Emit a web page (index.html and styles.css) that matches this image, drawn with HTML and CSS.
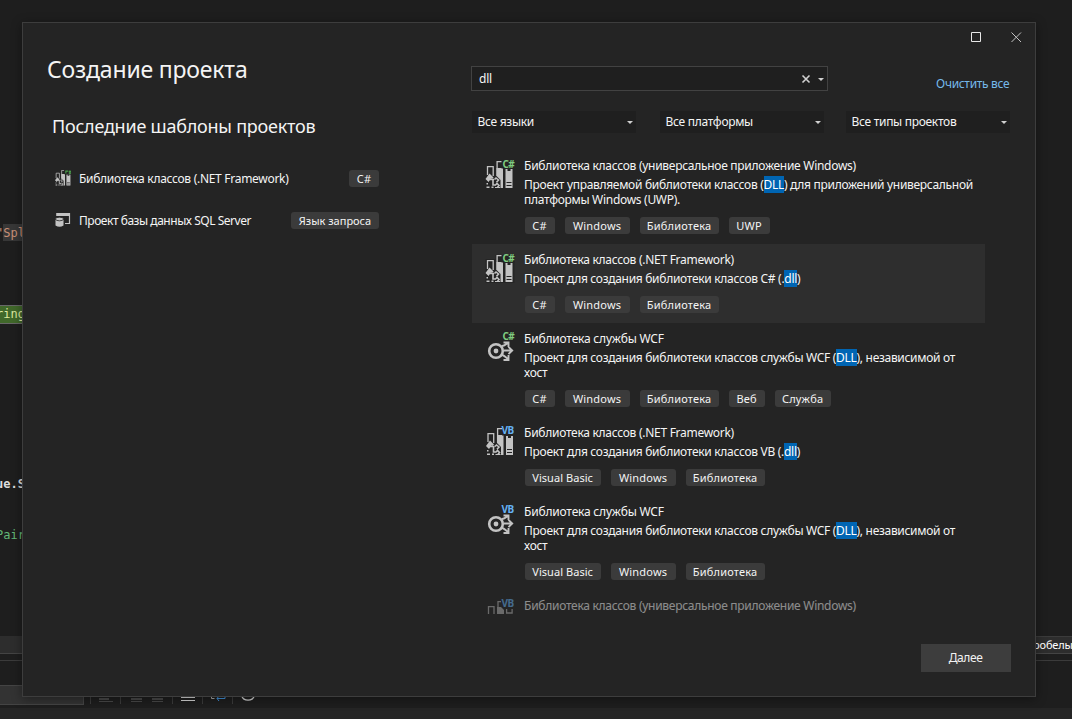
FILE: index.html
```html
<!DOCTYPE html>
<html lang="ru">
<head>
<meta charset="utf-8">
<title>Создание проекта</title>
<link rel="stylesheet" href="styles.css">
</head>
<body>
<svg width="0" height="0" class="defs">
  <defs>
    <g id="books">
      <path fill="#242424" d="M0 4h10V0h19v28H0z"/>
      <path fill="none" stroke="#c3c3c3" stroke-width="1.300" d="M2 14V5.600H7.700V15M11.600 15V.7H17"/>
      <path fill="#c3c3c3" d="M11 7h6.500v20H15v-8l-4-4zM20 8h7v19h-7z"/>
      <path fill="#242424" d="M16 0h13v7.500H16zM22 8h3v2h-3zM21 21h5v1h-5zM21 24h5v1h-5z"/>
      <path fill="#c3c3c3" d="M4 12.500l4 4-1.500 1.500-1-.5L3 21l-3-3z"/>
      <path fill="none" stroke="#c3c3c3" stroke-width="1.600" d="M4 18.500h4.500M7.500 19v5h3M9 18.500l1.500-1.500 2.500 2-2 2.200M10 24l1.500-1.500 2 2-1.500 1.700"/>
      <path fill="#c3c3c3" d="M1 22h1.500v1.500H1zM1 25.500h3V27H1zM6 25.500h2V27H6zM9.500 26h5v1h-5z"/>
    </g>
    <g id="service">
      <circle cx="10" cy="18" r="6.800" fill="none" stroke="#c3c3c3" stroke-width="2.600"/>
      <circle cx="10" cy="18" r="2.400" fill="#c3c3c3"/>
      <path fill="none" stroke="#c3c3c3" stroke-width="1.900" d="M18 17.500h8M22.500 13.800l3.700 3.700-3.700 3.700M16 13c2 0 3-1 6-3M17.500 9.500h5V14M16 22c2 0 3 2 6 4M17.500 27h5v-5"/>
    </g>
  </defs>
</svg>
<div class="editor">
  <span class="code string">"<i>Spl</i></span>
  <span class="code match">ring</span>
  <span class="code member">ue.S</span>
  <span class="code type">Pair</span>
  <div class="status left"></div>
  <div class="status right">робелы</div>
  <div class="rule"></div>
  <div class="combo"></div>
  <svg class="toolbar" width="280" height="12">
    <path stroke="#3b3b3b" d="M10.500 0v8M40.500 0v8M92.500 0v8M122.500 0v8M152.500 0v8"/>
    <path stroke="#484848" stroke-width="2" d="M19 3h10M51 3h11M72 3h11"/>
    <path stroke="#484848" d="M19 5.500h14M51 5.500h11M72 5.500h11"/>
    <path stroke="#d6d6d6" d="M101 1.500h14M101 4.500h14"/>
    <path stroke="#aaa" fill="none" d="M131.500 0v2.500h3"/>
    <path stroke="#4290d8" fill="none" d="M145 0v2.500h-8M139 0l-2 2.500 2 2.500"/>
    <path stroke="#d0d0d0" fill="none" d="M161.800 0a6.400 5.500 0 0 0 12.400 0" stroke-width="1.300"/>
  </svg>
  <div class="footer"></div>
</div>
<main class="dialog">
  <section class="recent">
    <h1>Создание проекта</h1>
    <h2>Последние шаблоны проектов</h2>
    <div class="recent-row">
      <svg width="16" height="16" viewBox="0 0 28 28"><use href="#books"/><path d="M19 6V2h4M24 2.500h4M24 5.500h4M26 1v6" stroke="#4b9b4b" stroke-width="2" fill="none"/></svg>
      <span class="name net">Библиотека классов (.NET Framework)</span><span class="tag t-cs">C#</span>
    </div>
    <div class="recent-row">
      <svg width="16" height="16"><path fill="none" stroke="#c3c3c3" stroke-width="1.200" d="M2 4V1.500h12.500v10H10M2 3.500h12"/><path fill="#c3c3c3" d="M1.500 1H15v3H1.500zM.5 8h8v5.500q-4 2.500-8 0z"/><ellipse cx="4.500" cy="7" rx="4" ry="1.800" fill="#c3c3c3" stroke="#242424" stroke-width=".8"/></svg>
      <span class="name sql">Проект базы данных SQL Server</span><span class="tag t-query">Язык запроса</span>
    </div>
  </section>
  <section class="search">
    <div class="caption">
      <svg width="60" height="14"><path d="M5.500 2.500h9v9h-9z" fill="none" stroke="#e8e8e8"/><path d="M45.500 2.500l9.500 9.500M55 2.500L45.500 12" stroke="#c4c4c4"/></svg>
    </div>
    <div class="top">
      <div class="field"><span>dll</span><svg width="30" height="12"><path d="M6.500 2.500l7 7M13.500 2.500l-7 7" stroke="#d0d0d0" stroke-width="1.600"/><path d="M22 5h6l-3 3z" fill="#d0d0d0"/></svg></div>
      <a class="clear">Очистить все</a>
    </div>
    <div class="filters">
      <div class="filter"><span>Все языки</span><b></b></div>
      <div class="filter platforms"><span>Все платформы</span><b></b></div>
      <div class="filter"><span>Все типы проектов</span><b></b></div>
    </div>
    <div class="list">
      <article class="item">
        <svg class="icon" width="32" height="32"><use href="#books" x="1.500" y="3"/><text class="cs" x="18.500" y="10">C#</text></svg>
        <div class="info"><h3>Библиотека классов (универсальное приложение Windows)</h3>
        <p>Проект управляемой библиотеки классов (<mark>DLL</mark>) для приложений универсальной<br>платформы Windows (UWP).</p>
        <div class="tags"><span class="tag t-cs">C#</span><span class="tag t-win">Windows</span><span class="tag t-lib">Библиотека</span><span class="tag t-uwp">UWP</span></div></div>
      </article>
      <article class="item selected">
        <svg class="icon" width="32" height="32"><use href="#books" x="1.500" y="3"/><text class="cs" x="18.500" y="10">C#</text></svg>
        <div class="info"><h3>Библиотека классов (.NET Framework)</h3>
        <p>Проект для создания библиотеки классов C# (.<mark>dll</mark>)</p>
        <div class="tags"><span class="tag t-cs">C#</span><span class="tag t-win">Windows</span><span class="tag t-lib">Библиотека</span></div></div>
      </article>
      <article class="item">
        <svg class="icon" width="32" height="32"><use href="#service" x="2" y="2"/><text class="cs" x="18.500" y="9">C#</text></svg>
        <div class="info"><h3 class="wcf">Библиотека службы WCF</h3>
        <p>Проект для создания библиотеки классов службы WCF (<mark>DLL</mark>), независимой от<br>хост</p>
        <div class="tags"><span class="tag t-cs">C#</span><span class="tag t-win">Windows</span><span class="tag t-lib">Библиотека</span><span class="tag t-web">Веб</span><span class="tag t-service">Служба</span></div></div>
      </article>
      <article class="item">
        <svg class="icon" width="32" height="32"><use href="#books" x="2" y="3"/><text class="vb" x="17.500" y="9">VB</text></svg>
        <div class="info"><h3>Библиотека классов (.NET Framework)</h3>
        <p>Проект для создания библиотеки классов VB (.<mark>dll</mark>)</p>
        <div class="tags"><span class="tag t-vb">Visual Basic</span><span class="tag t-win">Windows</span><span class="tag t-lib">Библиотека</span></div></div>
      </article>
      <article class="item">
        <svg class="icon" width="32" height="32"><use href="#service" x="2" y="2"/><text class="vb" x="17.500" y="9">VB</text></svg>
        <div class="info"><h3 class="wcf">Библиотека службы WCF</h3>
        <p>Проект для создания библиотеки классов службы WCF (<mark>DLL</mark>), независимой от<br>хост</p>
        <div class="tags"><span class="tag t-vb">Visual Basic</span><span class="tag t-win">Windows</span><span class="tag t-lib">Библиотека</span></div></div>
      </article>
      <article class="item faded">
        <svg class="icon" width="32" height="32"><path fill="none" stroke="#b0b0b0" stroke-width="1.300" d="M4.500 16V8.600h5.500V16M17 3.600h-3V16M22.600 11v4h5.500v-4"/><path fill="#b0b0b0" d="M13 9h4l3 3v4h-7z"/><text class="vb" x="17.500" y="9">VB</text></svg>
        <div class="info"><h3>Библиотека классов (универсальное приложение Windows)</h3></div>
      </article>
    </div>
    <button class="next">Далее</button>
  </section>
</main>
</body>
</html>
```
FILE: styles.css
```css
* { box-sizing: border-box; }
body { margin: 0; width: 1072px; height: 719px; overflow: hidden; background: #1e1e1e; color: #f4f4f4; font: 12px/16px "Noto Sans", sans-serif; padding: 22px; }
h1, h2, h3, p { margin: 0; font-weight: 400; }
.defs { position: absolute; }
.editor { position: absolute; inset: 0; overflow: hidden; }
.code { position: absolute; left: -4px; font: 700 12px/18px "DejaVu Sans Mono", monospace; height: 18px; white-space: pre; }
.string { top: 224px; color: #c98f76; font-weight: 400; }
.string i { font-style: normal; background: #373737; display: inline-block; height: 17px; }
.match { top: 305px; height: 19px; width: 30px; line-height: 17px; color: #dce7a0; background: #40682a; border: solid #686868; border-width: 1px 0; font-weight: 400; }
.member { top: 475px; color: #dcdcdc; }
.type { top: 526px; color: #62b777; font-weight: 400; }
.status { position: absolute; background: #2d2d2d; height: 18px; top: 636px; border-bottom: 1px solid #444; }
.left { left: 0; width: 22px; }
.right { left: 1033px; width: 40px; border-top: 1px solid #3b3b3b; color: #fff; white-space: nowrap; font-size: 11px; letter-spacing: -.15px; }
.rule { position: absolute; top: 660px; width: 100%; height: 1px; background: #3b3b3b; }
.combo { position: absolute; top: 685px; width: 84px; height: 20px; background: #333; border: 1px solid #444; border-left: 0; }
.toolbar { position: absolute; left: 80px; top: 696px; }
.footer { position: absolute; bottom: 0; width: 100%; height: 11px; background: #252525; }
.dialog { position: relative; width: 1014px; height: 675px; display: flex; background: #242424; border: 1px solid #3d3d3d; box-shadow: 0 2px 10px #0006; }
.recent { width: 448px; padding: 29px 0 0 24px; }
h1 { font-size: 23px; line-height: 34px; white-space: nowrap; letter-spacing: -.18px; }
h2 { font-size: 18px; line-height: 26px; margin: 27px 0 0 5px; white-space: nowrap; letter-spacing: -.23px; }
.recent-row { display: flex; align-items: center; width: 324px; height: 26px; margin: 26px 0 0 8px; }
.recent-row + .recent-row { margin-top: 16px; }
.name { margin-left: 8px; padding-top: 2px; white-space: nowrap; }
.net { letter-spacing: -.29px; }
.sql { letter-spacing: -.46px; }
.recent-row .tag { margin-left: auto; }
.tag { height: 17px; line-height: 17px; font-size: 11px; text-align: center; background: #3b3b3b; border-radius: 3px; white-space: nowrap; letter-spacing: .2px; }
.t-cs { width: 30px; }
.t-win { width: 65px; }
.t-lib { width: 79px; }
.t-uwp { width: 41px; }
.t-web { width: 36px; }
.t-service { width: 56px; }
.t-vb { width: 76px; letter-spacing: .05px; }
.t-query { width: 88px; letter-spacing: 0; }
.search { width: 565px; display: flex; flex-direction: column; }
.caption { display: flex; justify-content: flex-end; padding: 7px 9px 0 0; height: 43px; }
.top { display: flex; height: 45px; }
.field { width: 357px; height: 25px; display: flex; align-items: center; justify-content: space-between; padding: 0 1px 0 7.5px; background: #1f1f1f; border: 1px solid #424242; letter-spacing: -.3px; }
.clear { color: #75b9ea; margin: 10px 0 0 108.500px; white-space: nowrap; letter-spacing: -.32px; }
.filters { display: flex; height: 39px; margin-left: 1px; align-items: flex-start; }
.filter { flex: none; display: flex; justify-content: space-between; align-items: center; background: #1f1f1f; width: 164px; height: 22px; padding: 0 3px 0 6px; letter-spacing: -.3px; }
.platforms { margin: 0 22px 0 24px; }
.filter span { white-space: nowrap; }
.filter b { border: 3px solid transparent; border-top-color: #d0d0d0; border-bottom: 0; }
.list { height: 466px; width: 513px; margin-left: 1px; overflow: hidden; }
.item { display: flex; padding: 8px 0 0 12px; }
.icon { margin: 0 8.500px 0 0; flex: none; }
.info { padding-bottom: 9px; }
h3 { font-size: 12px; line-height: 16px; white-space: nowrap; letter-spacing: -.28px; }
.wcf { letter-spacing: -.2px; }
p { line-height: 15px; margin-top: 3px; white-space: nowrap; letter-spacing: -.3px; }
mark { color: #fff; background: #0065b3; }
.tags { display: flex; gap: 10px; margin: 10px 0 1px .5px; }
.selected { background: #2e2e2e; }
.faded { opacity: .5; }
.cs, .vb { font: 700 10px "Noto Sans", sans-serif; letter-spacing: -.6px; }
.cs { fill: #80cc80; }
.vb { fill: #65b2f5; }
.next { margin: 28px 0 0 450px; width: 90px; height: 28px; padding: 0; border: 0; background: #3d3d3d; color: #f2f2f2; font: 12px/16px "Noto Sans", sans-serif; letter-spacing: -.4px; }
```
